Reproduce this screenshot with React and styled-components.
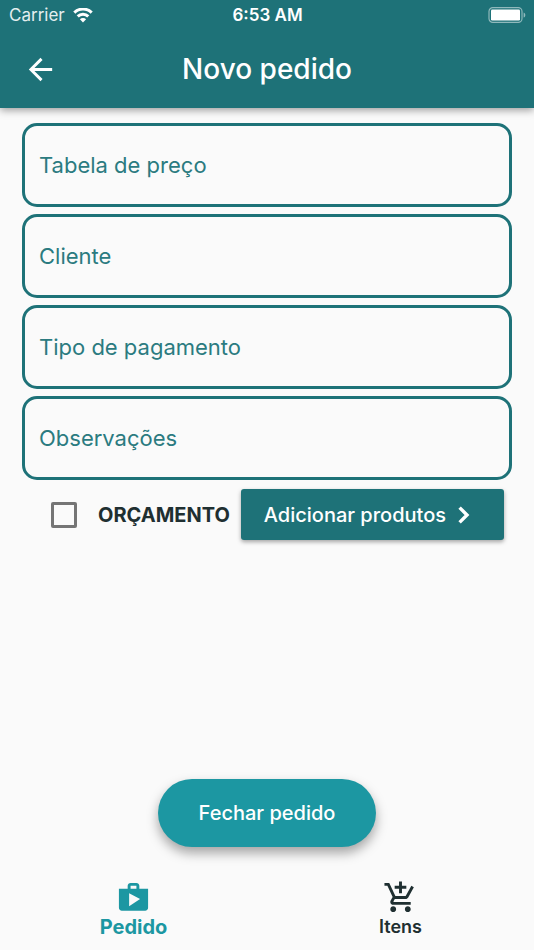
import React, { useState } from 'react';
import styled, { createGlobalStyle } from 'styled-components';
import {
	MdAddShoppingCart,
	MdArrowBack,
	MdShop
} from 'react-icons/md';

const fields = [
	{ name: 'priceTable', label: 'Tabela de preço' },
	{ name: 'client', label: 'Cliente' },
	{ name: 'payment', label: 'Tipo de pagamento' },
	{ name: 'notes', label: 'Observações' }
];

const tabs = [
	{ id: 'order', label: 'Pedido', Icon: MdShop },
	{ id: 'items', label: 'Itens', Icon: MdAddShoppingCart }
];

function WifiIcon() {
	return (
		<svg width="20" height="15" viewBox="0 0 20 15" fill="none" stroke="#fff" strokeWidth="3" aria-hidden="true">
			<path d="M1.3 4.6a12.4 12.4 0 0 1 17.4 0" />
			<path d="M4.7 8.4a7.6 7.6 0 0 1 10.6 0" />
			<path d="M10 14.4 6.9 11.2a4.4 4.4 0 0 1 6.2 0z" fill="#fff" stroke="none" />
		</svg>
	);
}

function BatteryIcon() {
	return (
		<svg width="38" height="16" viewBox="0 0 38 16" aria-hidden="true">
			<rect x="1" y="0.6" width="33" height="14.8" rx="3.8" fill="none" stroke="#fff" strokeOpacity="0.5" strokeWidth="1.2" />
			<rect x="3" y="2.5" width="29" height="11" rx="1.2" fill="#fff" />
			<path d="M35.6 5.4c2.3.8 2.3 4.4 0 5.2z" fill="#fff" fillOpacity="0.5" />
		</svg>
	);
}

function ChevronIcon() {
	return (
		<svg width="12" height="18" viewBox="0 0 12 18" fill="none" stroke="#fff" strokeWidth="3.4" aria-hidden="true">
			<path d="M1.6 1.6 9 9l-7.4 7.4" />
		</svg>
	);
}

export default function App() {
	const [values, setValues] = useState({});
	const [quote, setQuote] = useState(false);
	const [activeTab, setActiveTab] = useState('order');

	const handleChange = (event) => {
		const { name, value } = event.target;
		setValues((prev) => ({ ...prev, [name]: value }));
	};

	return (
		<Screen>
			<GlobalStyle />
			<Header>
				<StatusBar>
					<Carrier>
						Carrier
						<WifiIcon />
					</Carrier>
					<Time>6:53 AM</Time>
					<Battery>
						<BatteryIcon />
					</Battery>
				</StatusBar>
				<Toolbar>
					<BackButton type="button" aria-label="Voltar">
						<MdArrowBack size={35} />
					</BackButton>
					<Title>Novo pedido</Title>
				</Toolbar>
			</Header>
			<Form>
				{fields.map(({ name, label }) => (
					<Field
						key={name}
						name={name}
						aria-label={label}
						placeholder={label}
						value={values[name] || ''}
						onChange={handleChange}
					/>
				))}
				<Actions>
					<CheckLabel>
						<Checkbox
							type="checkbox"
							checked={quote}
							onChange={(event) => setQuote(event.target.checked)}
						/>
						ORÇAMENTO
					</CheckLabel>
					<AddButton type="button">
						Adicionar produtos
						<ChevronIcon />
					</AddButton>
				</Actions>
			</Form>
			<CloseButton type="button">Fechar pedido</CloseButton>
			<TabBar>
				{tabs.map(({ id, label, Icon }) => (
					<Tab
						key={id}
						type="button"
						$active={id === activeTab}
						onClick={() => setActiveTab(id)}
					>
						<Icon size={35} />
						{label}
					</Tab>
				))}
			</TabBar>
		</Screen>
	);
}

const GlobalStyle = createGlobalStyle`
	* {
		box-sizing: border-box;
	}

	body {
		margin: 0;
		background-color: #fafafa;
		font-family: Inter, "Liberation Sans", sans-serif;
	}

	button,
	input {
		font-family: inherit;
	}

	button {
		border: none;
		cursor: pointer;
	}
`;

const Screen = styled.div`
	min-height: 100vh;
	display: flex;
	flex-direction: column;
`;

const Header = styled.header`
	color: #fff;
	background-color: #1e7278;
	box-shadow: 0 2px 8px rgba(0, 0, 0, 0.4);
`;

const StatusBar = styled.div`
	height: 30px;
	padding: 0 8px 0 9px;
	display: grid;
	grid-template-columns: 1fr auto 1fr;
	align-items: center;
	font-size: 17px;
`;

const Carrier = styled.span`
	display: flex;
	align-items: center;
	gap: 8px;
	color: #e4eeef;
`;

const Time = styled.span`
	font-weight: 600;
`;

const Battery = styled.span`
	display: flex;
	justify-content: flex-end;
`;

const Toolbar = styled.div`
	height: 78px;
	padding: 0 23px;
	display: grid;
	grid-template-columns: 36px 1fr 36px;
	align-items: center;
`;

const BackButton = styled.button`
	padding: 0;
	display: flex;
	color: #fff;
	background: none;
`;

const Title = styled.h1`
	margin: 0;
	font-size: 28px;
	font-weight: 500;
	text-align: center;
`;

const Form = styled.form`
	padding: 15px 22px 0;
	display: flex;
	flex-direction: column;
	gap: 7px;
`;

const Field = styled.input`
	width: 100%;
	height: 84px;
	padding: 0 14px;
	border: 3px solid #1e7278;
	border-radius: 15px;
	color: #1e7278;
	background: none;
	font-size: 22px;

	&::placeholder {
		color: #2b7b80;
		opacity: 1;
	}
`;

const Actions = styled.div`
	padding: 2px 8px 0 29px;
	display: flex;
	align-items: center;
	justify-content: space-between;
`;

const CheckLabel = styled.label`
	display: flex;
	align-items: center;
	gap: 21px;
	color: #1f2f31;
	font-size: 20px;
	font-weight: 700;
`;

const Checkbox = styled.input`
	width: 26px;
	height: 26px;
	margin: 0;
	appearance: none;
	border: 3px solid #757575;
	border-radius: 2px;

	&:checked {
		border-color: #1c97a2;
		background-color: #1c97a2;
	}
`;

const AddButton = styled.button`
	height: 51px;
	padding: 0 34px 0 23px;
	display: flex;
	align-items: center;
	gap: 12px;
	border-radius: 3px;
	color: #fff;
	background-color: #1e7278;
	box-shadow: 0 2px 4px rgba(0, 0, 0, 0.35);
	font-size: 20px;
	font-weight: 500;
`;

const CloseButton = styled.button`
	height: 68px;
	margin-top: auto;
	padding: 0 41px;
	align-self: center;
	border-radius: 34px;
	color: #fff;
	background-color: #1c97a2;
	box-shadow: 0 6px 12px rgba(0, 0, 0, 0.35);
	font-size: 20px;
	font-weight: 500;
`;

const TabBar = styled.nav`
	height: 103px;
	padding: 33px 0 11px;
	display: grid;
	grid-template-columns: 1fr 1fr;
`;

const Tab = styled.button`
	padding: 0;
	display: flex;
	flex-direction: column;
	align-items: center;
	justify-content: space-between;
	color: ${({ $active }) => ($active ? '#1c97a2' : '#1f2f31')};
	background: none;
	font-size: ${({ $active }) => ($active ? '20px' : '18px')};
	font-weight: ${({ $active }) => ($active ? 700 : 600)};
	line-height: 24px;
`;
